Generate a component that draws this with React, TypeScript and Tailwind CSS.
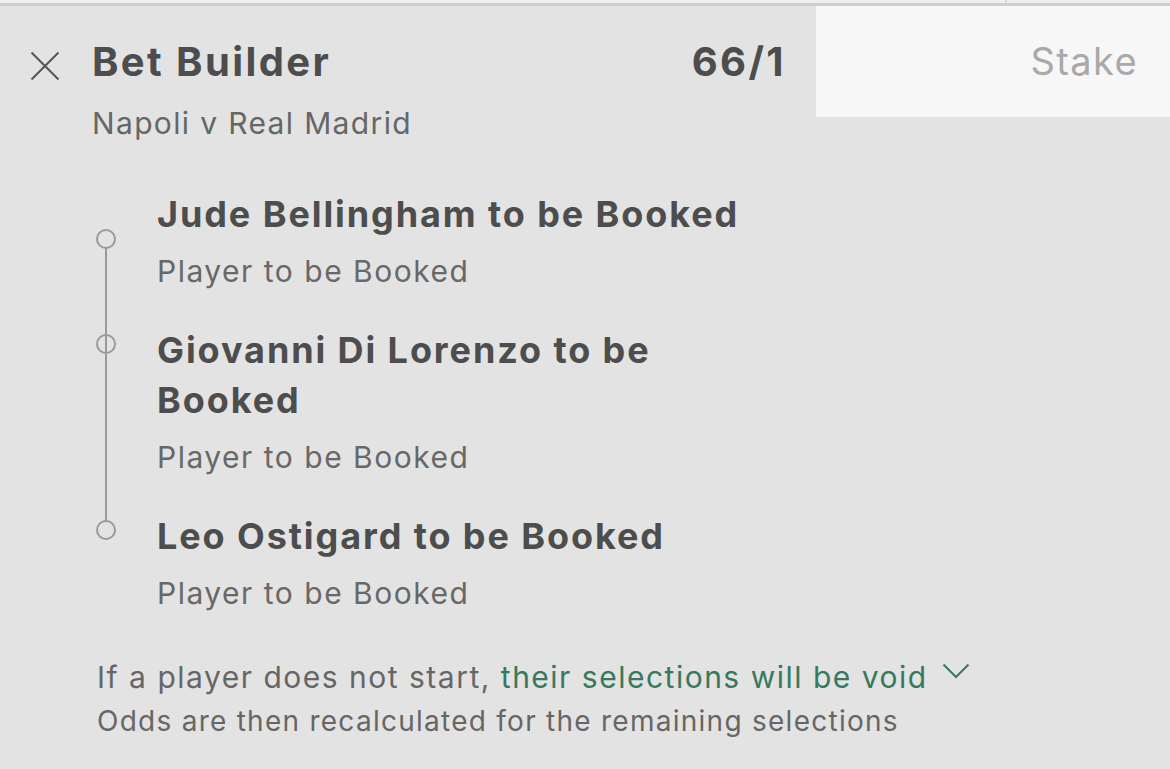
import React from "react";

type Leg = { title: string; market: string };

const legs: Leg[] = [
  { title: "Jude Bellingham to be Booked", market: "Player to be Booked" },
  { title: "Giovanni Di Lorenzo to be Booked", market: "Player to be Booked" },
  { title: "Leo Ostigard to be Booked", market: "Player to be Booked" },
];

const font = { fontFamily: "Inter, 'Liberation Sans', sans-serif" };

const CloseIcon = () => (
  <svg width="30" height="30" viewBox="0 0 30 30" className="shrink-0">
    <path d="M1.5 1.5 L28.5 28.5 M28.5 1.5 L1.5 28.5" stroke="#555555" strokeWidth="2" />
  </svg>
);

// vertical connector with a hollow node per leg
const Timeline = () => (
  <svg width="20" height="423" viewBox="0 0 20 423" className="shrink-0 ml-[96px] mr-[41px]">
    <line x1="10" y1="59" x2="10" y2="332" stroke="#9a9a9a" strokeWidth="2" />
    {[50, 155, 341].map((cy) => (
      <circle key={cy} cx="10" cy={cy} r="9" fill="none" stroke="#9a9a9a" strokeWidth="2" />
    ))}
  </svg>
);

export default function App() {
  return (
    <div className="w-[1170px] h-[769px] bg-[#e3e3e3] overflow-hidden text-[#4d4d4d]" style={font}>
      <div className="h-[3px] bg-[#efefef] flex">
        <div className="w-[1005px]" />
        <div className="w-[2px] bg-[#d9d9d9]" />
      </div>
      <div className="h-[3px] bg-[#cfcfcf]" />

      <div className="flex">
        <div className="flex-1 flex pl-[30px] pt-[32px] pr-[32px]">
          <div className="pt-[13px]">
            <CloseIcon />
          </div>
          <div className="ml-[32px] flex-1">
            <div className="flex justify-between text-[40px] leading-[48px] font-bold tracking-[0.06em]">
              <div>Bet Builder</div>
              <div className="mr-[-2px]">66/1</div>
            </div>
            <div className="mt-[17px] text-[30px] leading-[40px] tracking-[0.045em] text-[#666666]">
              Napoli v Real Madrid
            </div>
          </div>
        </div>
        <div className="w-[354px] h-[111px] bg-[#f7f7f7] flex items-center justify-end pr-[32px]">
          <span className="text-[38px] tracking-[0.037em] text-[#a9a9a9]">Stake</span>
        </div>
      </div>

      <div className="flex mt-[46px]">
        <Timeline />
        <div className="w-[610px] flex flex-col gap-[34px]">
          {legs.map((leg) => (
            <div key={leg.title}>
              <div className="text-[36px] leading-[50px] font-bold tracking-[0.053em]">{leg.title}</div>
              <div className="mt-[12px] text-[30px] leading-[40px] tracking-[0.05em] text-[#686868]">
                {leg.market}
              </div>
            </div>
          ))}
        </div>
      </div>

      <div className="pl-[97px] mt-[44px] text-[#666666]">
        <div className="flex items-center text-[30px] leading-[40px] tracking-[0.05em]">
          <span>If a player does not start,&nbsp;</span>
          <span className="text-[#37795c]">their selections will be void</span>
          <svg width="28" height="16" viewBox="0 0 28 16" className="ml-[14px] mb-[12px]">
            <path d="M1.5 1.5 L14 14 L26.5 1.5" fill="none" stroke="#37795c" strokeWidth="2" />
          </svg>
        </div>
        <div className="mt-[6px] text-[28px] leading-[36px] tracking-[0.045em]">
          Odds are then recalculated for the remaining selections
        </div>
      </div>
    </div>
  );
}
